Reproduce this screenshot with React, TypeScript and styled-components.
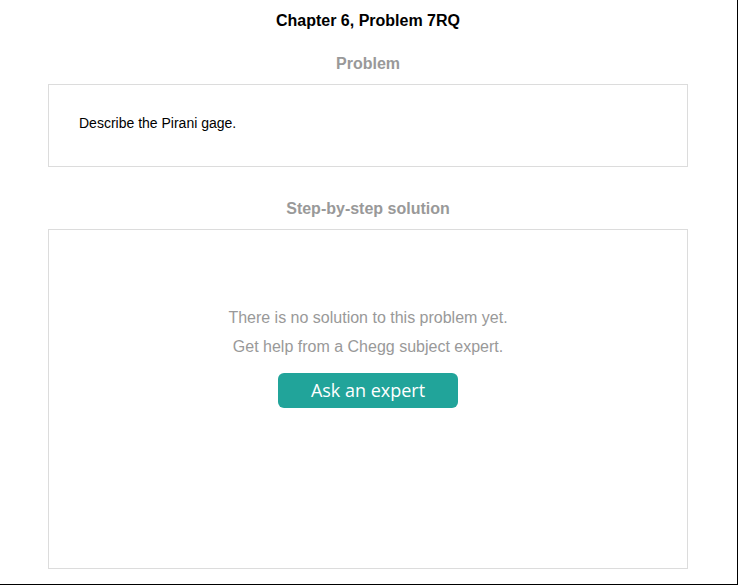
import React from "react";
import styled, { createGlobalStyle } from "styled-components";

const Global = createGlobalStyle`
  html, body { margin: 0; padding: 0; background: #fff; }
  body { font-family: "Liberation Sans", Arial, sans-serif; }
`;

const Frame = styled.div`
  box-sizing: border-box;
  width: 738px;
  height: 585px;
  border-right: 1px solid #000;
  border-bottom: 1px solid #000;
  padding: 0 49px 0 48px;
  display: flex;
  flex-direction: column;
  align-items: stretch;
`;

const Title = styled.h1`
  margin: 11px 0 0;
  font-size: 16px;
  line-height: 20px;
  font-weight: 700;
  color: #000;
  text-align: center;
`;

const SectionHead = styled.h2<{ $top: number }>`
  margin: ${(p) => p.$top}px 0 0;
  font-size: 16px;
  line-height: 20px;
  font-weight: 700;
  color: #999;
  text-align: center;
`;

const Box = styled.div<{ $h: number }>`
  box-sizing: border-box;
  margin-top: 10px;
  height: ${(p) => p.$h}px;
  border: 1px solid #dcdcdc;
`;

const ProblemBox = styled(Box)`
  padding: 30px 30px 0;
  font-size: 14px;
  line-height: 16px;
  color: #000;
`;

const SolutionBox = styled(Box)`
  display: flex;
  flex-direction: column;
  align-items: center;
  padding-top: 73px;
`;

const Note = styled.p`
  margin: 0;
  font-size: 16px;
  line-height: 29px;
  color: #999;
`;

const AskButton = styled.button`
  margin-top: 12px;
  width: 180px;
  height: 35px;
  border: none;
  border-radius: 6px;
  background: #21a49a;
  color: #fff;
  font-family: "Open Sans", "Noto Sans", sans-serif;
  font-size: 18px;
  line-height: 35px;
  padding: 0;
  cursor: pointer;
`;

export default function App() {
  return (
    <>
      <Global />
      <Frame>
        <Title>Chapter 6, Problem 7RQ</Title>
        <SectionHead $top={23}>Problem</SectionHead>
        <ProblemBox $h={83}>Describe the Pirani gage.</ProblemBox>
        <SectionHead $top={32}>Step-by-step solution</SectionHead>
        <SolutionBox $h={340}>
          <Note>There is no solution to this problem yet.</Note>
          <Note>Get help from a Chegg subject expert.</Note>
          <AskButton>Ask an expert</AskButton>
        </SolutionBox>
      </Frame>
    </>
  );
}
